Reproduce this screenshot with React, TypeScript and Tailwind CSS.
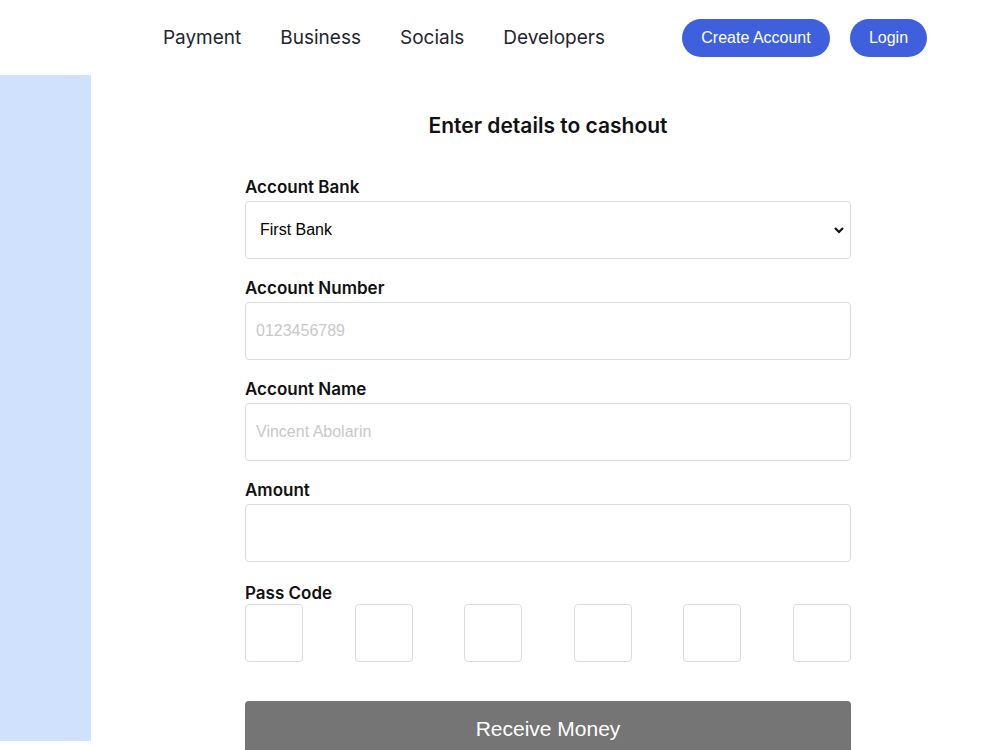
import { useState } from "react";

const navLinks = ["Payment", "Business", "Socials", "Developers"];

function Field({ label, placeholder }: { label: string; placeholder?: string }) {
  return (
    <div className="mb-[17px]">
      <label className="block text-[17px] leading-6 font-semibold text-[#111] mb-[2px]">{label}</label>
      <input
        type="text"
        placeholder={placeholder}
        className="w-full h-[58px] px-[10px] border border-[#dcdcdc] rounded-[4px] font-['Liberation_Sans',Arial,sans-serif] text-base text-black placeholder:text-[#c8c8c8] outline-none"
      />
    </div>
  );
}

export default function App() {
  const [bank, setBank] = useState("first");
  const [code] = useState(["", "", "", "", "", ""]);

  return (
    <div className="min-h-screen bg-white font-['Inter',sans-serif]">
      <header className="h-[75px] flex items-center justify-end pr-[73px]">
        <nav className="flex items-center gap-[39px] text-[19px] text-[#1f2430]">
          {navLinks.map((link) => (
            <a key={link} href="#" className="leading-none">
              {link}
            </a>
          ))}
        </nav>
        <div className="ml-[77px] flex items-center gap-5 font-['Liberation_Sans',Arial,sans-serif] text-base text-white">
          <button className="h-[38px] w-[148px] rounded-full bg-[#3e60dc]">Create Account</button>
          <button className="h-[38px] w-[77px] rounded-full bg-[#3e60dc]">Login</button>
        </div>
      </header>

      <div className="flex">
        <aside className="w-[91px] h-[666px] bg-[#d0e1fd] shrink-0" />
        <main className="flex-1">
          <form className="w-[606px] ml-[154px] pt-[37px]" onSubmit={(e) => e.preventDefault()}>
            <h1 className="text-center text-[21px] leading-7 font-semibold text-[#111] mb-[35px]">
              Enter details to cashout
            </h1>

            <div className="mb-[17px]">
              <label className="block text-[17px] leading-6 font-semibold text-[#111] mb-[2px]">Account Bank</label>
              <div className="relative">
                <select
                  value={bank}
                  onChange={(e) => setBank(e.target.value)}
                  className="w-full h-[58px] pl-[14px] pr-8 appearance-none bg-white border border-[#dcdcdc] rounded-[4px] font-['Liberation_Sans',Arial,sans-serif] text-base text-black outline-none"
                >
                  <option value="first">First Bank</option>
                  <option value="gtb">GT Bank</option>
                  <option value="access">Access Bank</option>
                </select>
                <svg
                  className="absolute right-[5px] top-1/2 -translate-y-1/2 pointer-events-none"
                  width="14"
                  height="14"
                  viewBox="0 0 14 14"
                >
                  <path d="M3 5 7 9 11 5" fill="none" stroke="#111" strokeWidth="2.2" />
                </svg>
              </div>
            </div>

            <Field label="Account Number" placeholder="0123456789" />
            <Field label="Account Name" placeholder="Vincent Abolarin" />
            <Field label="Amount" />

            <div className="mt-[19px]">
              <label className="block text-[17px] leading-6 font-semibold text-[#111] -mb-px">Pass Code</label>
              <div className="flex justify-between">
                {code.map((c, i) => (
                  <input
                    key={i}
                    maxLength={1}
                    defaultValue={c}
                    className="w-[58px] h-[58px] border border-[#dcdcdc] rounded-[4px] text-center font-['Liberation_Sans',Arial,sans-serif] text-xl outline-none"
                  />
                ))}
              </div>
            </div>

            <button
              type="submit"
              className="mt-[39px] w-full h-[56px] bg-[#757575] rounded-[4px] text-white text-[21px] font-['Liberation_Sans',Arial,sans-serif]"
            >
              Receive Money
            </button>
          </form>
        </main>
      </div>
    </div>
  );
}
